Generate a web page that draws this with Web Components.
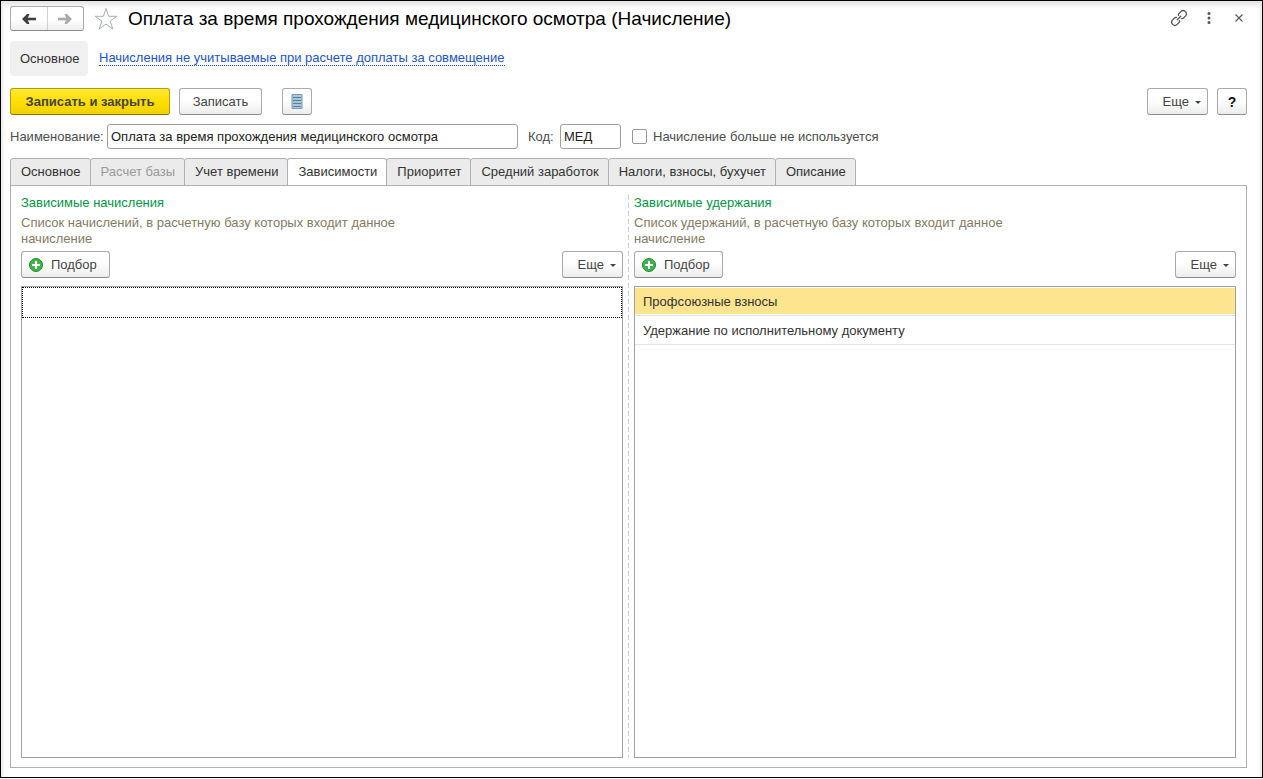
<!DOCTYPE html>
<html lang="ru">
<head>
<meta charset="utf-8">
<title>Оплата за время прохождения медицинского осмотра (Начисление)</title>
<style>
  html, body { height: 100%; margin: 0; }
  body { background: #fff; color: #333; font: 13px/16px "Liberation Sans", Arial, sans-serif; }
</style>
</head>
<body>
<app-window>
  <window-header slot="header">Оплата за время прохождения медицинского осмотра (Начисление)</window-header>
  <section-nav slot="nav"></section-nav>
  <command-bar slot="commands"></command-bar>
  <record-fields slot="fields"></record-fields>
  <tab-panel>
    <picker-list heading="Зависимые начисления" hint="Список начислений, в расчетную базу которых входит данное начисление" rows=""></picker-list>
    <picker-list heading="Зависимые удержания" hint="Список удержаний, в расчетную базу которых входит данное начисление" rows="Профсоюзные взносы|Удержание по исполнительному документу"></picker-list>
  </tab-panel>
</app-window>

<script>
const base = `*, *::before, *::after { box-sizing: border-box; } button, input { font: inherit; color: inherit; margin: 0; }`;

class BaseElement extends HTMLElement {
  connectedCallback() {
    if (this.shadowRoot) return;
    this.attachShadow({ mode: 'open' }).innerHTML = `<style>${base}${this.css()}</style>${this.html()}`;
  }
}

customElements.define('app-window', class extends BaseElement {
  css() { return `
    :host { display: block; height: 100%; min-height: 480px; padding-bottom: 1px; box-sizing: border-box; }
    main { height: 100%; display: flex; flex-direction: column; border: 1px solid #000; padding: 5px 15px 9px 9px;
      box-shadow: inset 0 5px 5px -1px #e4e4e6, inset 5px 0 5px -4px #e8e4e6, inset -5px 0 5px -4px #e8e8ea; }
    ::slotted([slot=nav]) { margin-top: 10px; }
    ::slotted([slot=commands]) { margin-top: 12px; }
    ::slotted([slot=fields]) { margin: 9px 0; }
    ::slotted(tab-panel) { flex: 1; min-height: 0; }`; }
  html() { return `<main><slot name="header"></slot><slot name="nav"></slot><slot name="commands"></slot><slot name="fields"></slot><slot></slot></main>`; }
});

customElements.define('window-header', class extends BaseElement {
  css() { return `
    :host { display: flex; align-items: center; height: 25px; }
    .history { display: flex; width: 74px; height: 25px; border: 1px solid #aaa; border-bottom-color: #8c8c8c; border-radius: 3px; background: linear-gradient(#fff 50%, #f0f0f0); }
    button { display: flex; align-items: center; justify-content: center; padding: 0; border: 0; background: none; }
    .history button { flex: 1; }
    .history button + button { border-left: 1px solid #d0d0d0; }
    .star { width: 24px; height: 24px; margin: 0 10px; }
    h1 { flex: 1; margin: 0; color: #000; font: 19px/24px "Liberation Sans", Arial, sans-serif; white-space: nowrap; }
    .tools { display: flex; gap: 6px; margin-right: -4px; height: 24px; align-self: flex-start; }
    .tools button { width: 24px; height: 24px; }
    svg { display: block; }`; }
  html() { return `
    <div class="history">
      <button aria-label="Назад"><svg width="16" height="12" viewBox="0 0 16 12"><path d="M3 6H15" stroke="#404040" stroke-width="2.6"/><path d="M1 6 6 1H8.5L6.4 6 8.5 11H6Z" fill="#404040"/></svg></button>
      <button aria-label="Вперед"><svg width="16" height="12" viewBox="0 0 16 12"><path d="M1 6H13" stroke="#aaa" stroke-width="2.6"/><path d="M15 6 10 1H7.5L9.6 6 7.5 11H10Z" fill="#aaa"/></svg></button>
    </div>
    <button class="star" aria-label="В избранное"><svg width="24" height="24" viewBox="0 0 24 24"><path d="M12 1.5 14.6 9.3H22.8L16.2 14.1 18.8 22 12 17.1 5.2 22 7.8 14.1 1.2 9.3H9.4Z" fill="#fff" stroke="#a8adb2"/></svg></button>
    <h1><slot></slot></h1>
    <div class="tools">
      <button aria-label="Ссылка"><svg width="18" height="18" viewBox="0 0 18 18"><g fill="none" stroke="#555" stroke-width="1.3" stroke-linecap="round" transform="rotate(-45 9 9)"><path d="M7.6 6.8Q7 5.8 5.8 5.8H3.2a3.2 3.2 0 0 0 0 6.4H5.8Q7 12.2 7.6 11.2M10.4 6.8Q11 5.8 12.2 5.8h2.6a3.2 3.2 0 0 1 0 6.4H12.2Q11 12.2 10.4 11.2M6.5 9h5"/></g></svg></button>
      <button aria-label="Меню"><svg width="4" height="14" viewBox="0 0 4 14"><g fill="#555"><circle cx="2" cy="2.5" r="1.5"/><circle cx="2" cy="7" r="1.5"/><circle cx="2" cy="11.5" r="1.5"/></g></svg></button>
      <button aria-label="Закрыть"><svg width="8" height="8" viewBox="0 0 8 8"><path d="M.5.5 7.5 7.5M7.5.5.5 7.5" stroke="#555" stroke-width="1.1"/></svg></button>
    </div>`; }
});

customElements.define('section-nav', class extends BaseElement {
  css() { return `
    :host { display: flex; align-items: center; gap: 11px; height: 35px; }
    span { padding: 10px 10px 9px; border-radius: 4px; background: #f0f0f0; color: #333; width: 78px; white-space: nowrap; }
    a { color: #2255c4; text-decoration: none; border-bottom: 1px dotted #2255c4; line-height: 14px; }`; }
  html() { return `<span aria-current="page">Основное</span><a href="#combination">Начисления не учитываемые при расчете доплаты за совмещение</a>`; }
});

customElements.define('cmd-button', class extends BaseElement {
  css() { return `
    :host { display: block; height: 27px; }
    button { display: flex; align-items: center; justify-content: center; width: 100%; height: 100%; padding: 0 6px; white-space: nowrap;
      border: 1px solid #aaa; border-bottom-color: #8c8c8c; border-radius: 3px; background: linear-gradient(#fff 45%, #ececec); color: #444; }
    :host([kind=primary]) button { font-weight: bold; border-color: #b89d00; border-bottom-color: #8d7800; background: linear-gradient(#ffe838, #ffdf00 50%, #f2d000); }
    :host([kind=menu]) { width: 61px; }
    :host([kind=menu]) button { justify-content: flex-end; gap: 6px; }
    :host([kind=menu]) button::after { content: ""; border: 3px solid transparent; border-top-color: #444; border-bottom: 0; margin-top: 2px; }
    :host([kind=add]) { width: 89px; }
    :host([kind=add]) button { justify-content: flex-start; gap: 7px; }
    :host([kind=help]) button { font-weight: bold; color: #111; font-size: 14px; }
    svg { display: block; }`; }
  html() {
    const plus = `<svg width="16" height="16" viewBox="0 0 16 16"><circle cx="8" cy="8" r="6.5" fill="#3eb44b" stroke="#218c32"/><path d="M8 4V12M4 8H12" stroke="#fff" stroke-width="2"/></svg>`;
    return `<button type="button">${this.getAttribute('kind') === 'add' ? plus : ''}<slot></slot></button>`;
  }
});

customElements.define('command-bar', class extends BaseElement {
  css() { return `
    :host { display: flex; height: 27px; }
    .save { width: 160px; margin-right: 9px; }
    .write { width: 83px; margin-right: 20px; }
    .icon { width: 30px; }
    .more { margin-left: auto; margin-right: 9px; }
    .help { width: 30px; }
    svg { display: block; }`; }
  html() { return `
    <cmd-button class="save" kind="primary">Записать и закрыть</cmd-button>
    <cmd-button class="write">Записать</cmd-button>
    <cmd-button class="icon"><svg width="12" height="15" viewBox="0 0 12 15" role="img" aria-label="Список"><path d="M1 .5H11V14.5H1Z" fill="#a9c7dc" stroke="#7d9cb3"/><path d="M2 3.5H10M2 6.5H10M2 9.5H10M2 12.5H10" stroke="#5a7f9b"/></svg></cmd-button>
    <cmd-button class="more" kind="menu">Еще</cmd-button>
    <cmd-button class="help" kind="help">?</cmd-button>`; }
});

customElements.define('record-fields', class extends BaseElement {
  css() { return `
    :host { display: flex; align-items: center; height: 25px; color: #4d4d4d; white-space: nowrap; }
    .name-label { width: 97px; }
    .code-label { width: 32px; margin-left: 10px; }
    input[type=text] { height: 25px; padding: 0 3px; border: 1px solid #a0a0a0; border-radius: 3px; background: #fff; color: #222; outline: 0; }
    #name { flex: 0 1 411px; min-width: 0; }
    #code { width: 61px; }
    input[type=checkbox] { appearance: none; width: 15px; height: 15px; margin: 0 6px 0 11px; border: 1px solid #999; border-radius: 2px; background: #fff; }`; }
  html() { return `
    <label class="name-label" for="name">Наименование:</label><input type="text" id="name" value="Оплата за время прохождения медицинского осмотра">
    <label class="code-label" for="code">Код:</label><input type="text" id="code" value="МЕД">
    <input type="checkbox" id="unused"><label for="unused">Начисление больше не используется</label>`; }
});

customElements.define('tab-panel', class extends BaseElement {
  css() { return `
    :host { display: flex; flex-direction: column; }
    .tabs { display: flex; height: 28px; margin-bottom: -1px; }
    button { height: 28px; padding: 0 9px 0 10px; border: 1px solid #b0b0b0; border-radius: 3px 3px 0 0; background: #ebebeb; color: #333; white-space: nowrap; }
    button + button { margin-left: -1px; }
    button:disabled { color: #999; }
    button[aria-selected=true] { background: #fff; border-bottom-color: #fff; }
    .body { flex: 1; min-height: 0; display: grid; grid-template-columns: 1fr 11px 1fr; border: 1px solid #b0b0b0; padding: 9px 10px; }
    slot { display: contents; }
    .divider { grid-column: 2; grid-row: 1; width: 1px; justify-self: center; background: repeating-linear-gradient(#ccc 0 5px, #fff 5px 8px); }
    ::slotted(*) { min-width: 0; grid-row: 1; }
    ::slotted(:first-child) { grid-column: 1; }
    ::slotted(:last-child) { grid-column: 3; }`; }
  html() {
    const tabs = ['Основное', 'Расчет базы', 'Учет времени', 'Зависимости', 'Приоритет', 'Средний заработок', 'Налоги, взносы, бухучет', 'Описание'];
    return `<div class="tabs" role="tablist">${tabs.map((t, i) => `<button type="button" role="tab" aria-selected="${i === 3}"${i === 1 ? ' disabled' : ''}>${t}</button>`).join('')}</div>
    <div class="body" role="tabpanel"><div class="divider"></div><slot></slot></div>`;
  }
});

customElements.define('picker-list', class extends BaseElement {
  css() { return `
    :host { display: flex; flex-direction: column; }
    h2 { margin: 0 0 4px; font: inherit; color: #009646; }
    p { margin: 0 0 4px; max-width: 400px; min-height: 32px; color: #857a5f; }
    .bar { display: flex; justify-content: space-between; margin-bottom: 8px; }
    .list { flex: 1; min-height: 0; border: 1px solid #a0a0a0; background: #fff; }
    table { width: 100%; border-collapse: separate; border-spacing: 0; }
    td { height: 29px; padding: 2px 8px 0; border-bottom: 1px solid #e2e2e2; }
    tr.selected td { background: #fde590; box-shadow: inset 0 1px #fff, inset 0 -1px #fff; }
    .empty td { height: 31px; border: 1px dotted #000; }`; }
  html() {
    const rows = this.getAttribute('rows').split('|').filter(Boolean);
    const body = rows.length
      ? rows.map((r, i) => `<tr${i ? '' : ' class="selected"'}><td>${r}</td></tr>`).join('')
      : '<tr class="empty"><td></td></tr>';
    return `<h2>${this.getAttribute('heading')}</h2><p>${this.getAttribute('hint')}</p>
      <div class="bar"><cmd-button kind="add">Подбор</cmd-button><cmd-button kind="menu">Еще</cmd-button></div>
      <div class="list"><table>${body}</table></div>`;
  }
});
</script>
</body>
</html>
